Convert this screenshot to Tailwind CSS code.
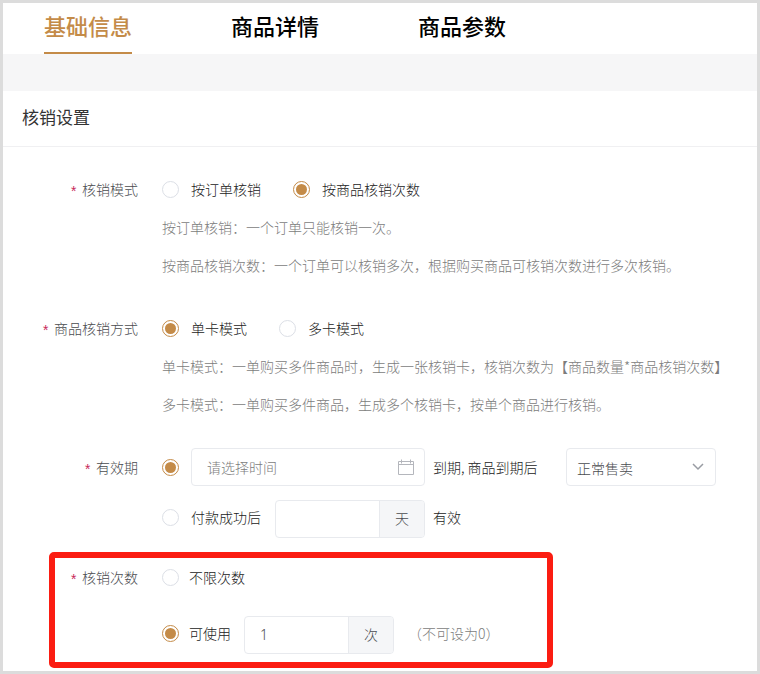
<!DOCTYPE html>
<html lang="zh-CN">
<head>
<meta charset="utf-8">
<meta name="viewport" content="width=device-width, initial-scale=1">
<title>核销设置</title>
<script src="https://cdn.jsdelivr.net/npm/@tailwindcss/browser@4"></script>
</head>
<body class="min-h-screen flex flex-col bg-white border-3 border-[#dcdcdc] font-['Noto_Sans_CJK_SC',sans-serif] text-[14px] text-[#222]">
  <nav class="flex h-[51px] pl-[41px] gap-[99px] text-[22px] leading-[42px] font-medium text-black">
    <button type="button" class="h-[51px] pb-[5px] border-b-2 border-[#c48b48] text-[#c48b48]">基础信息</button>
    <button type="button" class="h-[51px] pb-[5px] border-b-2 border-transparent">商品详情</button>
    <button type="button" class="h-[51px] pb-[5px] border-b-2 border-transparent">商品参数</button>
  </nav>
  <div class="h-[37px] bg-[#f6f6f7]"></div>
  <h1 class="h-14 pl-[19px] leading-[52px] text-[17px] text-[#333] border-b border-[#f0f0f2]">核销设置</h1>

  <form class="flex flex-col gap-[25px] pt-[23px] pb-4 leading-[38px] font-light">
    <div class="flex gap-6" role="radiogroup" aria-labelledby="mode">
      <div id="mode" class="flex justify-end gap-1 w-[135px] shrink-0 text-[#4a4c50]"><span class="h-[38px] pt-1 font-['Liberation_Mono',monospace] text-[#c8285a]">*</span>核销模式</div>
      <div>
        <div class="flex gap-8">
          <label class="flex items-center gap-3"><input type="radio" name="mode" class="size-[17px] appearance-none grid place-content-center rounded-full border border-[#dcdfe6] checked:border-[#c48b48] checked:before:size-[11px] checked:before:rounded-full checked:before:bg-[#c48b48]">按订单核销</label>
          <label class="flex items-center gap-3"><input type="radio" name="mode" checked class="size-[17px] appearance-none grid place-content-center rounded-full border border-[#dcdfe6] checked:border-[#c48b48] checked:before:size-[11px] checked:before:rounded-full checked:before:bg-[#c48b48]">按商品核销次数</label>
        </div>
        <p class="text-[#7c7c7c]">按订单核销：一个订单只能核销一次。</p>
        <p class="text-[#7c7c7c]">按商品核销次数：一个订单可以核销多次，根据购买商品可核销次数进行多次核销。</p>
      </div>
    </div>

    <div class="flex gap-6" role="radiogroup" aria-labelledby="card">
      <div id="card" class="flex justify-end gap-1 w-[135px] shrink-0 text-[#4a4c50]"><span class="h-[38px] pt-1 font-['Liberation_Mono',monospace] text-[#c8285a]">*</span>商品核销方式</div>
      <div>
        <div class="flex gap-8">
          <label class="flex items-center gap-3"><input type="radio" name="card" checked class="size-[17px] appearance-none grid place-content-center rounded-full border border-[#dcdfe6] checked:border-[#c48b48] checked:before:size-[11px] checked:before:rounded-full checked:before:bg-[#c48b48]">单卡模式</label>
          <label class="flex items-center gap-3"><input type="radio" name="card" class="size-[17px] appearance-none grid place-content-center rounded-full border border-[#dcdfe6] checked:border-[#c48b48] checked:before:size-[11px] checked:before:rounded-full checked:before:bg-[#c48b48]">多卡模式</label>
        </div>
        <p class="text-[#7c7c7c]">单卡模式：一单购买多件商品时，生成一张核销卡，核销次数为【商品数量*商品核销次数】</p>
        <p class="text-[#7c7c7c]">多卡模式：一单购买多件商品，生成多个核销卡，按单个商品进行核销。</p>
      </div>
    </div>

    <div class="flex gap-6" role="radiogroup" aria-labelledby="valid">
      <div id="valid" class="flex justify-end gap-1 w-[135px] shrink-0 text-[#4a4c50]"><span class="h-[38px] pt-1 font-['Liberation_Mono',monospace] text-[#c8285a]">*</span>有效期</div>
      <div class="flex flex-col gap-[14px]">
        <div class="flex items-center">
          <input type="radio" name="valid" checked aria-label="到期时间" class="size-[17px] mr-3 appearance-none grid place-content-center rounded-full border border-[#dcdfe6] checked:border-[#c48b48] checked:before:size-[11px] checked:before:rounded-full checked:before:bg-[#c48b48]">
          <div class="flex items-center w-[234px] h-[38px] mr-2 pl-[15px] pr-[10px] rounded border border-[#e8eaee]">
            <input type="text" aria-label="请选择时间" placeholder="请选择时间" class="flex-1 min-w-0 outline-none placeholder:text-[#7c7c7c]">
            <svg class="size-4" viewBox="0 0 16 16" fill="none" stroke="#b4b6bc" aria-hidden="true"><path d="M.5 2.5h15v13H.5zM.5 5.5h15M3.500 .5v4M12.500 .5v4"/></svg>
          </div>
          <label for="after" class="w-[133px]">到期, 商品到期后</label>
          <div class="relative w-[150px] h-[38px]">
            <select id="after" class="block size-full appearance-none pl-[10px] pb-1 rounded border border-[#e8eaee] text-[#4a4c50]"><option>正常售卖</option></select>
            <svg class="absolute right-3 top-[15px] w-3 h-2 pointer-events-none" viewBox="0 0 12 8" fill="none" stroke="#999ca3" stroke-width="1.500" aria-hidden="true"><path d="M1 1l5 5 5-5"/></svg>
          </div>
        </div>
        <div class="flex items-start leading-[34px]">
          <label class="flex items-center gap-3 w-[113px]"><input type="radio" name="valid" class="size-[17px] appearance-none grid place-content-center rounded-full border border-[#dcdfe6] checked:border-[#c48b48] checked:before:size-[11px] checked:before:rounded-full checked:before:bg-[#c48b48]">付款成功后</label>
          <div class="flex w-[150px] h-[38px] mr-2 rounded border border-[#e8eaee] overflow-hidden">
            <input type="text" aria-label="有效天数" class="flex-1 min-w-0 px-[15px] outline-none">
            <span class="w-[45px] border-l border-[#e8eaee] bg-[#f5f6f8] text-center leading-[34px] text-[#4a4c50]">天</span>
          </div>
          <span>有效</span>
        </div>
      </div>
    </div>

    <div class="relative flex gap-6 -mt-[5px]" role="radiogroup" aria-labelledby="times">
      <div id="times" class="flex justify-end gap-1 w-[135px] shrink-0 text-[#4a4c50]"><span class="h-[38px] pt-1 font-['Liberation_Mono',monospace] text-[#c8285a]">*</span>核销次数</div>
      <div class="flex flex-col gap-5">
        <label class="flex items-center gap-[10px]"><input type="radio" name="times" class="size-[17px] appearance-none grid place-content-center rounded-full border border-[#dcdfe6] checked:border-[#c48b48] checked:before:size-[11px] checked:before:rounded-full checked:before:bg-[#c48b48]">不限次数</label>
        <div class="flex items-start leading-[34px]">
          <label class="flex items-center gap-[10px] w-[82px]"><input type="radio" name="times" checked class="size-[17px] appearance-none grid place-content-center rounded-full border border-[#dcdfe6] checked:border-[#c48b48] checked:before:size-[11px] checked:before:rounded-full checked:before:bg-[#c48b48]">可使用</label>
          <div class="flex w-[150px] h-[38px] mr-[14px] rounded border border-[#e8eaee] overflow-hidden">
            <input type="text" value="1" aria-label="可使用次数" class="flex-1 min-w-0 px-[15px] outline-none font-['Noto_Sans',sans-serif] text-[#4a4c50]">
            <span class="w-[45px] border-l border-[#e8eaee] bg-[#f5f6f8] text-center leading-[34px] text-[#4a4c50]">次</span>
          </div>
          <span class="text-[#7c7c7c]">（不可设为0）</span>
        </div>
      </div>
      <div class="absolute left-[46px] -top-[6px] -bottom-[14px] w-[504px] border-6 border-[#fb1d12] rounded-[5px] pointer-events-none"></div>
    </div>
  </form>
</body>
</html>
